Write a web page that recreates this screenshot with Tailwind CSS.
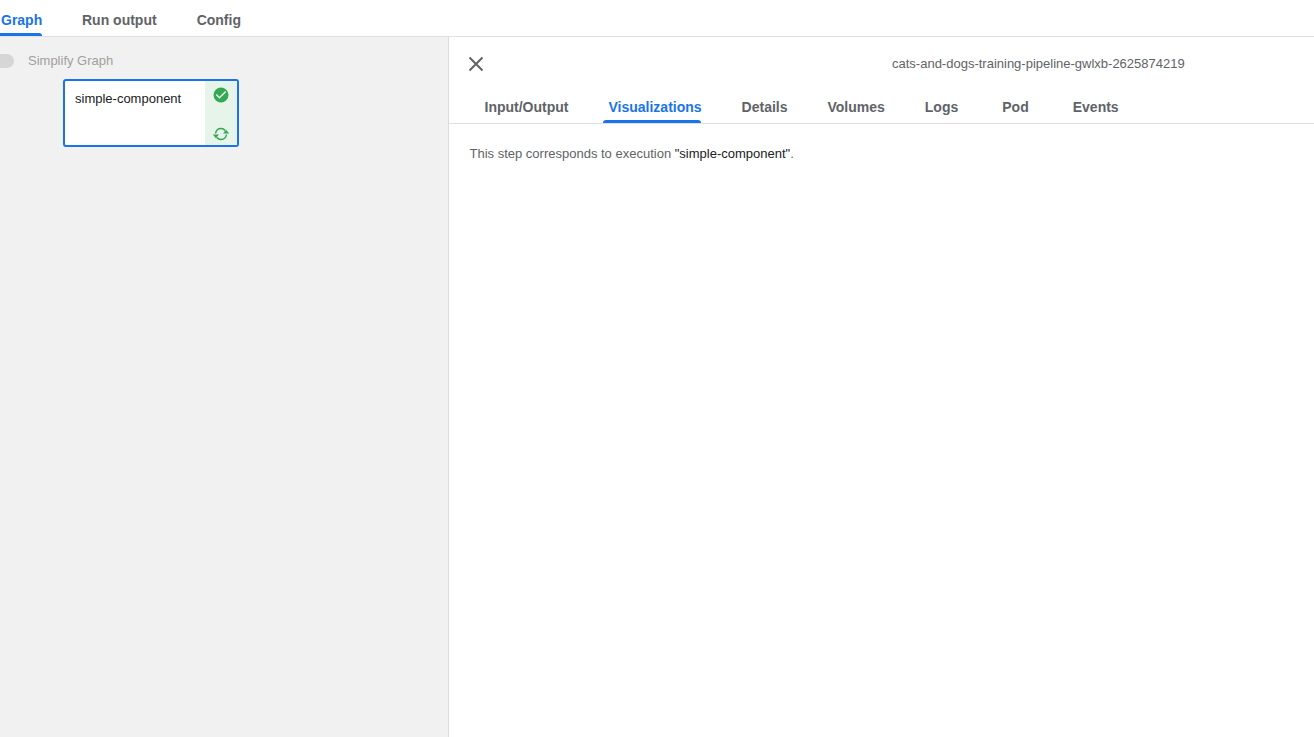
<!DOCTYPE html>
<html><head><script src="https://cdn.jsdelivr.net/npm/@tailwindcss/browser@4"></script></head>
<body class="m-0 overflow-hidden bg-white">
<div class="w-[1314px] h-[737px] flex flex-col font-['Liberation_Sans',Arial,sans-serif]">
  <div class="h-[37px] flex-none flex border-b border-[#e0e0e0] text-[14px] font-bold text-[#5f6368]">
    <div class="relative w-[42px] pl-[1px] pt-[12px] leading-[16px] text-[#1a73e8]">Graph<div class="absolute left-0 right-0 bottom-0 h-[3px] rounded-tr-[3px] bg-[#1a73e8]"></div></div>
    <div class="ml-[40px] pt-[12px] leading-[16px]">Run output</div>
    <div class="ml-[40px] pt-[12px] leading-[16px]">Config</div>
  </div>
  <div class="flex-1 flex min-h-0">
    <div class="w-[448px] flex-none bg-[#f1f1f1] relative">
      <div class="flex items-center h-[16px] mt-[16px]">
        <div class="w-[14px] h-[14px] rounded-r-full bg-[#d6d6d6]"></div>
        <span class="ml-[14px] text-[13px] text-[#a19f9d]">Simplify Graph</span>
      </div>
      <div class="absolute left-[63px] top-[42px] w-[176px] h-[68px] bg-white border-2 border-[#1a73e8] rounded-[3px] flex">
        <div class="flex-1 pl-[10px] pt-[10px] text-[13px] leading-[15px] text-[#202124]">simple-component</div>
        <div class="w-[32px] bg-[#e6f4ea] flex flex-col items-center justify-between pt-[5px] pb-[2px]">
          <svg width="18" height="18" viewBox="0 0 24 24" fill="#34a853"><path d="M12 2a10 10 0 1 0 0 20 10 10 0 0 0 0-20zm-2 15-5-5 1.400-1.400 3.600 3.600 7.600-7.600L19 8l-9 9z"/></svg>
          <svg width="18" height="18" viewBox="0 0 18 18" fill="none"><path d="M3.500 8.500C4 5.500 6.300 3.500 9 3.500c1.800 0 3.200.7 4.200 2" stroke="#34a853" stroke-width="1.500"/><path d="M14.500 9.500C14 12.500 11.700 14.500 9 14.500c-1.800 0-3.200-.7-4.200-2" stroke="#34a853" stroke-width="1.500"/><path d="M11 8.500h6.200l-3.100-3.800zM.8 9.500H7l-3.100 3.800z" fill="#34a853"/></svg>
        </div>
      </div>
    </div>
    <div class="flex-1 border-l border-[#dadce0] bg-white flex flex-col">
      <div class="relative h-[50px] flex-none">
        <svg class="absolute left-[17px] top-[17px]" width="20" height="20" viewBox="0 0 20 20" stroke="#5f6368" stroke-width="2" fill="none"><path d="M3.500 3.500l13 13M16.500 3.500l-13 13"/></svg>
        <div class="absolute left-[443px] top-[19px] text-[13px] leading-[16px] text-[#5f6368]">cats-and-dogs-training-pipeline-gwlxb-2625874219</div>
      </div>
      <div class="h-[37px] flex-none flex border-b border-[#e0e0e0] text-[14px] font-bold text-[#5f6368] pl-[35.500px] pt-[12px] leading-[16px]">
        <div>Input/Output</div>
        <div class="relative ml-[40px] text-[#1a73e8]">Visualizations<div class="absolute -left-[5px] right-[1px] top-[21px] h-[3px] rounded-t-[3px] bg-[#1a73e8]"></div></div>
        <div class="ml-[40px]">Details</div><div class="ml-[40px]">Volumes</div><div class="ml-[40px]">Logs</div><div class="ml-[44px]">Pod</div><div class="ml-[44px]">Events</div>
      </div>
      <div class="pl-[20.500px] pt-[22px] text-[13px] leading-[16px] text-[#5f6368]">This step corresponds to execution <span class="text-[#202124]">"simple-component"</span>.</div>
    </div>
  </div>
</div>
</body></html>
